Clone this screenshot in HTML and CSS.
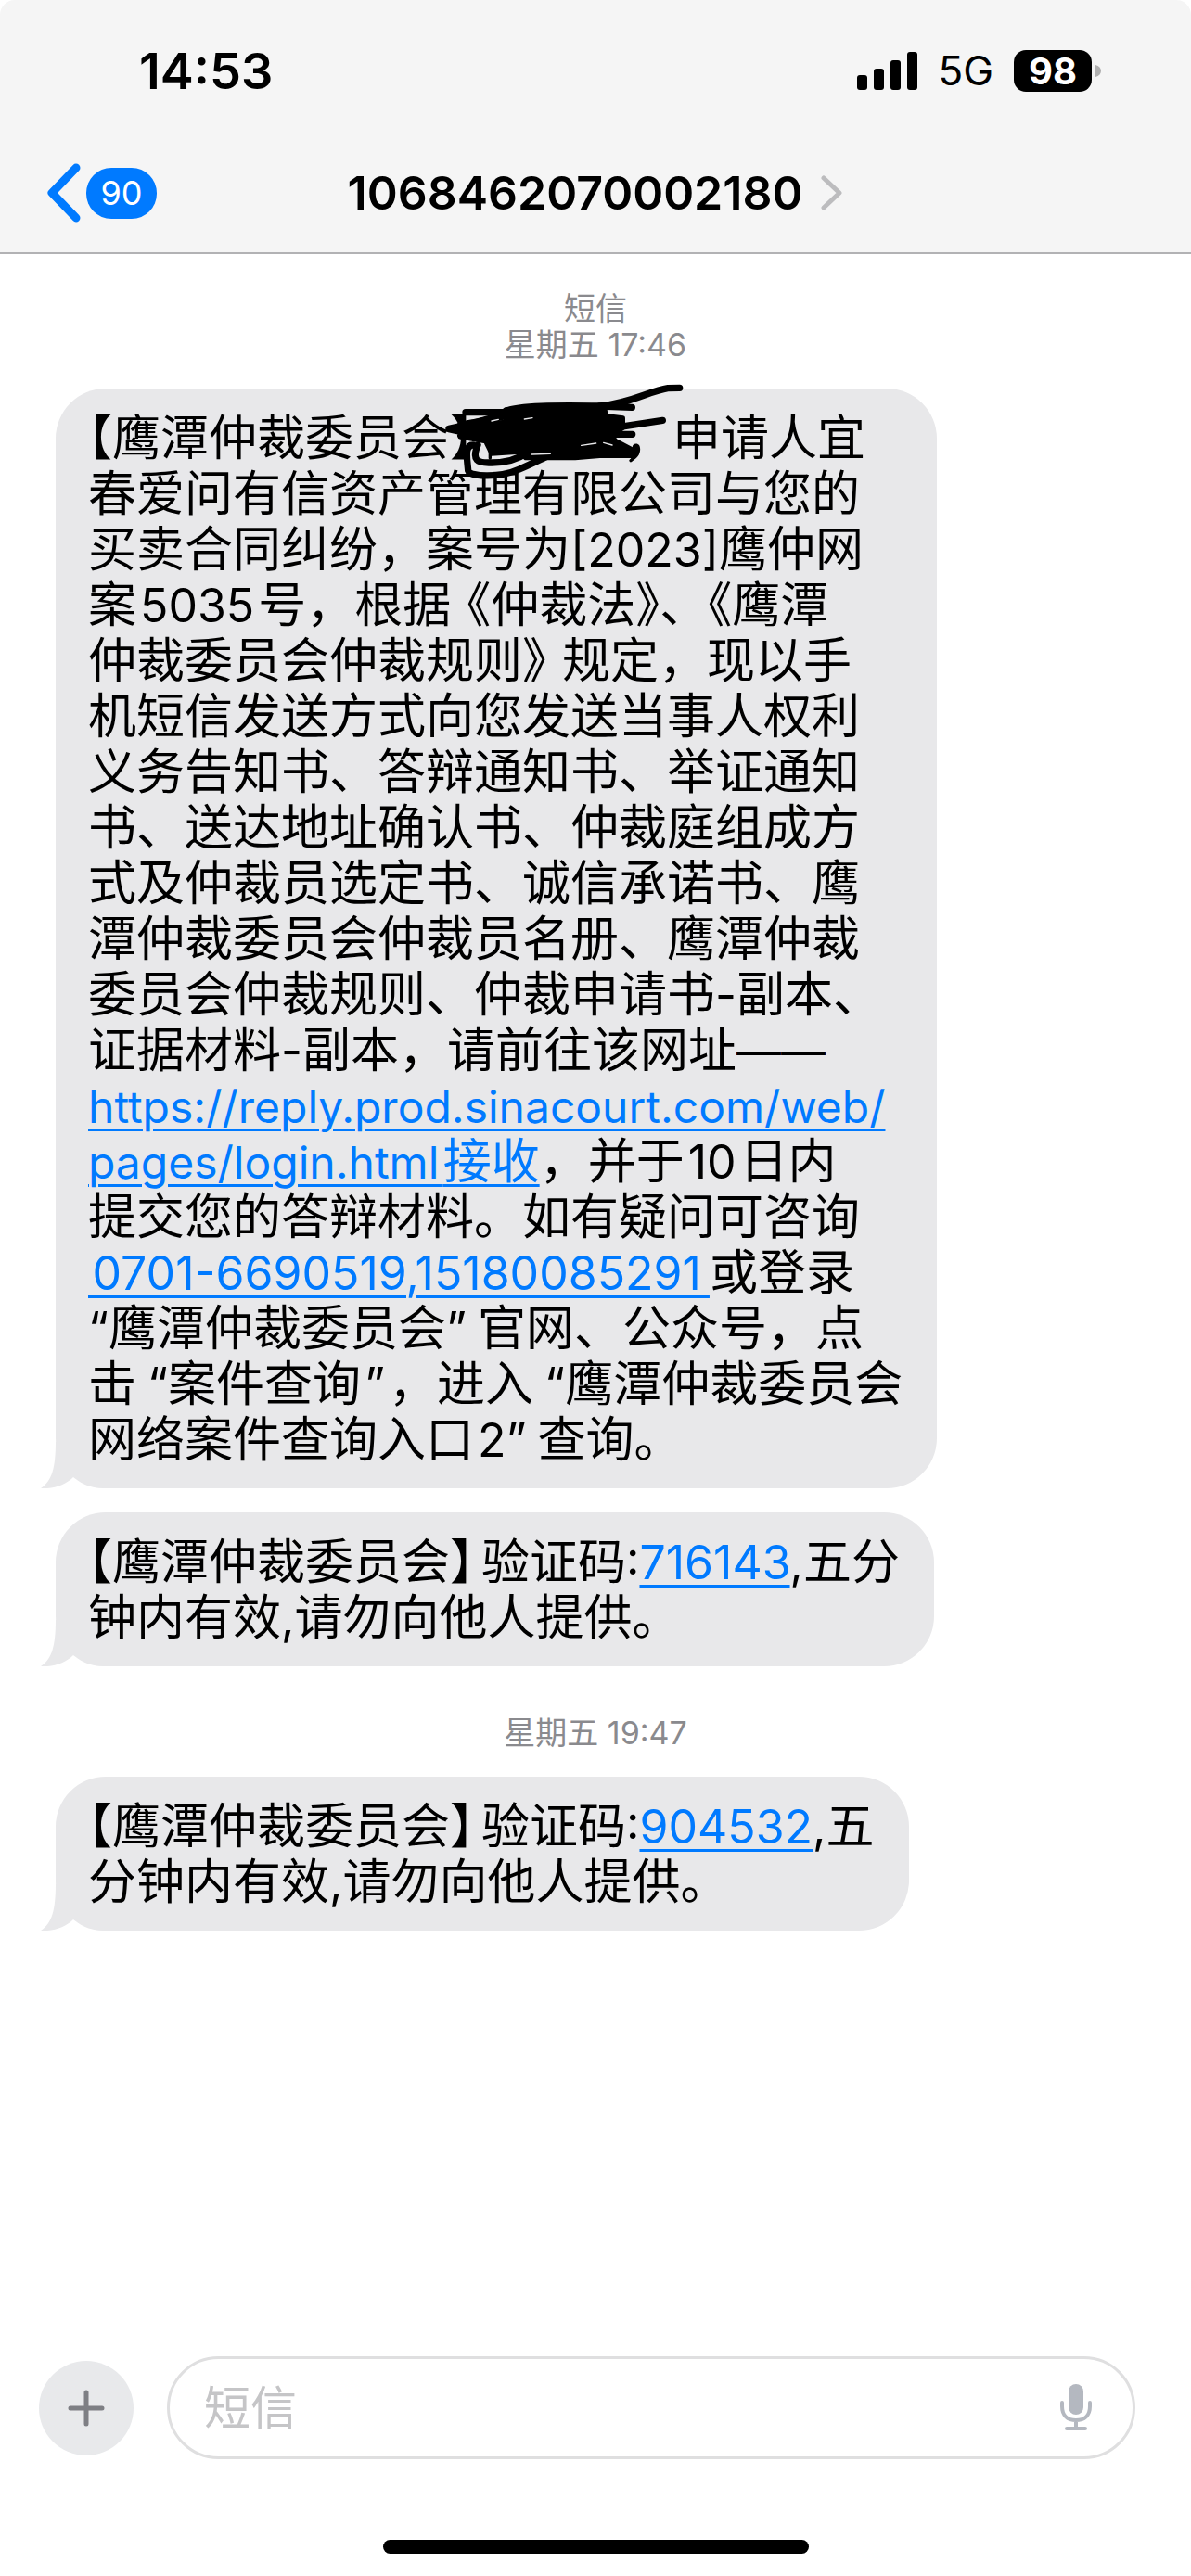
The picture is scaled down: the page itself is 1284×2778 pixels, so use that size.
FILE: index.html
```html
<!DOCTYPE html>
<html lang="zh-CN">
<head>
  <meta charset="UTF-8" />
  <meta name="viewport" content="width=device-width, initial-scale=1.0"/>
  <title>1068462070002180</title>
  <link rel="stylesheet" href="styles.css">
</head>
<body>
  <header class="header">
    <div class="status-bar">
      <span class="time">14:53</span>
      <div class="status-icons">
        <svg class="signal" width="65" height="41" viewBox="0 0 65 41">
          <rect x="0" y="25" width="11" height="16" rx="3"/>
          <rect x="18" y="18" width="11" height="23" rx="3"/>
          <rect x="36" y="9" width="11" height="32" rx="3"/>
          <rect x="54" y="0" width="11" height="41" rx="3"/>
        </svg>
        <span class="network">5G</span>
        <span class="battery">98</span>
        <svg class="battery-tip" width="6" height="13" viewBox="0 0 6 13"><path d="M0 0 C8 2 8 11 0 13 Z"/></svg>
      </div>
    </div>
    <nav class="nav">
      <button class="back" aria-label="返回">
        <svg width="38" height="64" viewBox="0 0 38 64"><path d="M32 5 L6 32 L32 59"/></svg>
        <span class="badge">90</span>
      </button>
      <button class="contact">
        1068462070002180
        <svg width="24" height="38" viewBox="0 0 24 38"><path d="M3 3 L20 19 L3 35"/></svg>
      </button>
    </nav>
  </header>

  <main class="messages">
    <div class="stamp">短信<br>星期五 17:46</div>

    <div class="bubble">
      <svg class="tail" width="70" height="50" viewBox="0 0 70 50"><path d="M16 0 C16 28 12 42 0 50 C14 51 27 46 35 38 C46 47 56 50 70 50 V0 Z"/></svg>
      <span class="half">【</span>鹰潭仲裁委员会<span class="half">】</span><span class="redacted"><svg class="scribble" width="300" height="130" viewBox="0 0 900 390">
        <path d="M126 134 H250 M72 187 C110 180 180 160 245 148 M72 188 L150 205" stroke-width="22"/>
        <path d="M110 175 C170 165 230 150 255 130 C300 112 420 112 560 114 L664 118 M110 210 C180 190 240 200 300 190 M600 205 H665" stroke-width="22"/>
        <path d="M255 125 L400 112 L575 112 L580 145 L635 152 L635 185 L600 208 L610 225 L680 262 L668 275 L560 275 L480 282 L320 282 L300 262 L210 268 L190 228 L115 215 L115 175 L255 165 Z" fill="#000" stroke-width="14"/>
        <path d="M560 114 C660 105 720 65 780 56 L818 55 M620 182 L763 160" stroke-width="22"/>
        <path d="M165 240 C145 290 165 298 205 297 C250 298 290 290 330 262" stroke-width="22"/>
        <path d="M150 240 C120 240 132 290 134 322 C140 345 240 345 300 318 C340 300 360 290 400 272" stroke-width="22"/>
        <path d="M205 262 V282 M660 290 L672 280" stroke-width="10"/>
        <path d="M340 270 L400 268 M500 241 L548 234 M572 232 L600 240 M316 156 L342 152 M210 162 L232 157" stroke="#e8e8ea" stroke-width="4"/>
      </svg></span>，申请人宜<br>
      春爱问有信资产管理有限公司与您的<br>
      买卖合同纠纷，案号为<span class="en">[2023]</span>鹰仲网<br>
      案<span class="en gap-both">5035</span>号，根据<span class="half open">《</span>仲裁法》、《鹰潭<br>
      仲裁委员会仲裁规则<span class="half close">》</span>规定，现以手<br>
      机短信发送方式向您发送当事人权利<br>
      义务告知书、答辩通知书、举证通知<br>
      书、送达地址确认书、仲裁庭组成方<br>
      式及仲裁员选定书、诚信承诺书、鹰<br>
      潭仲裁委员会仲裁员名册、鹰潭仲裁<br>
      委员会仲裁规则、仲裁申请书<span class="en">-</span>副本、<br>
      证据材料<span class="en">-</span>副本，请前往该网址<span class="url">——</span><br>
      <a href="#"><span class="url">https://reply.prod.sinacourt.com/web/<br>pages/login.html&#8202;</span>接收</a>，并于<span class="en gap-both">10</span>日内<br>
      提交您的答辩材料。如有疑问可咨询<br>
      <a href="#"><span class="en">&#8202;0701-6690519,15180085291&#8201;</span></a>或登录<br>
      <span class="en">“</span>鹰潭仲裁委员会<span class="en gap-after">”</span>官网、公众号，点<br>
      击<span class="en gap-before">“</span>案件查询<span class="en gap-both">”</span>，进入<span class="en gap-before">“</span>鹰潭仲裁委员会<br>
      网络案件查询入口<span class="en gap-both">2”</span><span class="gap-both"></span>查询。
    </div>

    <div class="bubble">
      <svg class="tail" width="70" height="50" viewBox="0 0 70 50"><path d="M16 0 C16 28 12 42 0 50 C14 51 27 46 35 38 C46 47 56 50 70 50 V0 Z"/></svg>
      <span class="half">【</span>鹰潭仲裁委员会<span class="half">】</span><span class="gap-both"></span>验证码<span class="en">:<a href="#">716143</a>,</span>五分<br>
      钟内有效<span class="en">,</span>请勿向他人提供。
    </div>

    <div class="stamp">星期五 19:47</div>

    <div class="bubble">
      <svg class="tail" width="70" height="50" viewBox="0 0 70 50"><path d="M16 0 C16 28 12 42 0 50 C14 51 27 46 35 38 C46 47 56 50 70 50 V0 Z"/></svg>
      <span class="half">【</span>鹰潭仲裁委员会<span class="half">】</span><span class="gap-both"></span>验证码<span class="en">:<a href="#">904532</a>,</span>五<br>
      分钟内有效<span class="en">,</span>请勿向他人提供。
    </div>
  </main>

  <footer class="footer">
    <div class="composer">
      <button class="plus" aria-label="更多">
        <svg width="40" height="40" viewBox="0 0 40 40"><path d="M20 3 V37 M3 20 H37"/></svg>
      </button>
      <div class="field">
        <input type="text" placeholder="短信" aria-label="短信" />
        <button class="mic" aria-label="听写">
          <svg width="36" height="52" viewBox="0 0 36 52">
            <rect x="10" y="0" width="16" height="33" rx="8"/>
            <path d="M3 20 V24 C3 34 9 39 18 39 C27 39 33 34 33 24 V20 M18 39 V48 M8 48 H28"/>
          </svg>
        </button>
      </div>
    </div>
    <div class="home-bar"></div>
  </footer>
</body>
</html>
```

FILE: styles.css
```css
* {
  box-sizing: border-box;
}

body {
  margin: 0;
  min-height: 100vh;
  display: flex;
  flex-direction: column;
  background: #fff;
  color: #000;
  font-family: Inter, "Noto Sans CJK SC", sans-serif;
}

button {
  padding: 0;
  border: none;
  background: none;
  color: inherit;
  font: inherit;
  cursor: pointer;
}

svg {
  display: block;
  flex: none;
}

a {
  color: #007aff;
  text-decoration: underline;
  text-decoration-thickness: 3px;
  text-underline-offset: 6px;
}

.header {
  height: 274px;
  background: #f5f5f5;
  border-bottom: 2px solid #b2b2b4;
  border-radius: 16px 16px 0 0;
}

.status-bar {
  display: flex;
  justify-content: space-between;
  align-items: center;
  height: 152px;
  padding: 0 97px 0 150px;
}

.time {
  font-size: 54px;
  font-weight: 600;
}

.status-icons {
  display: flex;
  align-items: center;
}

.network {
  margin: 0 22px 0 22px;
  font-size: 44px;
}

.battery {
  width: 84px;
  height: 45px;
  border-radius: 13px;
  background: #000;
  color: #fff;
  font-size: 40px;
  font-weight: 700;
  line-height: 45px;
  text-align: center;
}

.battery-tip {
  margin-left: 4px;
  fill: #b0b0b0;
}

.nav {
  display: grid;
  grid-template-columns: 1fr auto 1fr;
  align-items: center;
  height: 112px;
  padding: 0 50px;
}

.back {
  display: flex;
  align-items: center;
  gap: 5px;
}

.back path {
  fill: none;
  stroke: #007aff;
  stroke-width: 9;
  stroke-linecap: round;
  stroke-linejoin: round;
}

.badge {
  width: 76px;
  height: 55px;
  border-radius: 27px;
  background: #007aff;
  color: #fff;
  font-size: 36px;
  line-height: 55px;
}

.contact {
  display: flex;
  align-items: center;
  gap: 20px;
  font-size: 50px;
  font-weight: 600;
}

.contact path {
  fill: none;
  stroke: #bcbcbe;
  stroke-width: 5;
  stroke-linecap: round;
  stroke-linejoin: round;
}

.messages {
  flex: 1;
  display: flex;
  flex-direction: column;
  align-items: flex-start;
  gap: 26px;
  padding: 39px 60px;
}

.stamp {
  align-self: center;
  padding-bottom: 2px;
  color: #8a8a8e;
  font-size: 34px;
  line-height: 39px;
  text-align: center;
}

.bubble + .stamp {
  margin-top: 26px;
}

.bubble {
  position: relative;
  isolation: isolate;
  padding: 24px 37px 22px 35px;
  border-radius: 54px;
  background: #e8e8ea;
  font-size: 52px;
  line-height: 60px;
  white-space: nowrap;
}

.tail {
  position: absolute;
  left: -16px;
  bottom: 0;
  z-index: -1;
  fill: #e8e8ea;
}

.en {
  font-size: 50px;
  line-height: 1;
}

.url {
  font-size: 48px;
  line-height: 1;
}

/* half-width brackets */
.half {
  font-feature-settings: "halt";
}

.open {
  margin-left: 17px;
}

.close {
  margin-right: 17px;
}

.gap-both {
  margin: 0 4px;
}

.gap-before {
  margin-left: 12px;
}

.gap-after {
  margin-right: 12px;
}

.redacted {
  display: inline-block;
  position: relative;
  width: 162px;
  height: 60px;
  vertical-align: top;
}

.scribble {
  position: absolute;
  left: -51px;
  top: -43px;
  fill: none;
  stroke: #000;
  stroke-linecap: round;
  stroke-linejoin: round;
  z-index: 1;
}

.composer {
  display: flex;
  align-items: center;
  gap: 36px;
  padding: 0 60px 0 42px;
}

.plus {
  display: flex;
  align-items: center;
  justify-content: center;
  width: 102px;
  height: 102px;
  border-radius: 50%;
  background: #e8e9eb;
}

.plus path {
  stroke: #7e7f84;
  stroke-width: 5;
  stroke-linecap: round;
}

.field {
  flex: 1;
  display: flex;
  align-items: center;
  height: 111px;
  padding: 0 43px 0 37px;
  border: 3px solid #dfdfe0;
  border-radius: 56px;
}

.field input {
  flex: 1;
  min-width: 0;
  height: 100%;
  padding: 0;
  border: none;
  outline: none;
  background: none;
  font: inherit;
  font-size: 50px;
}

.field input::placeholder {
  color: #c5c5c7;
}

.mic svg {
  fill: #b4b8c0;
}

.mic path {
  fill: none;
  stroke: #b4b8c0;
  stroke-width: 4;
  stroke-linecap: round;
}

.home-bar {
  width: 459px;
  height: 15px;
  margin: 87px auto 24px;
  border-radius: 8px;
  background: #000;
}
```
